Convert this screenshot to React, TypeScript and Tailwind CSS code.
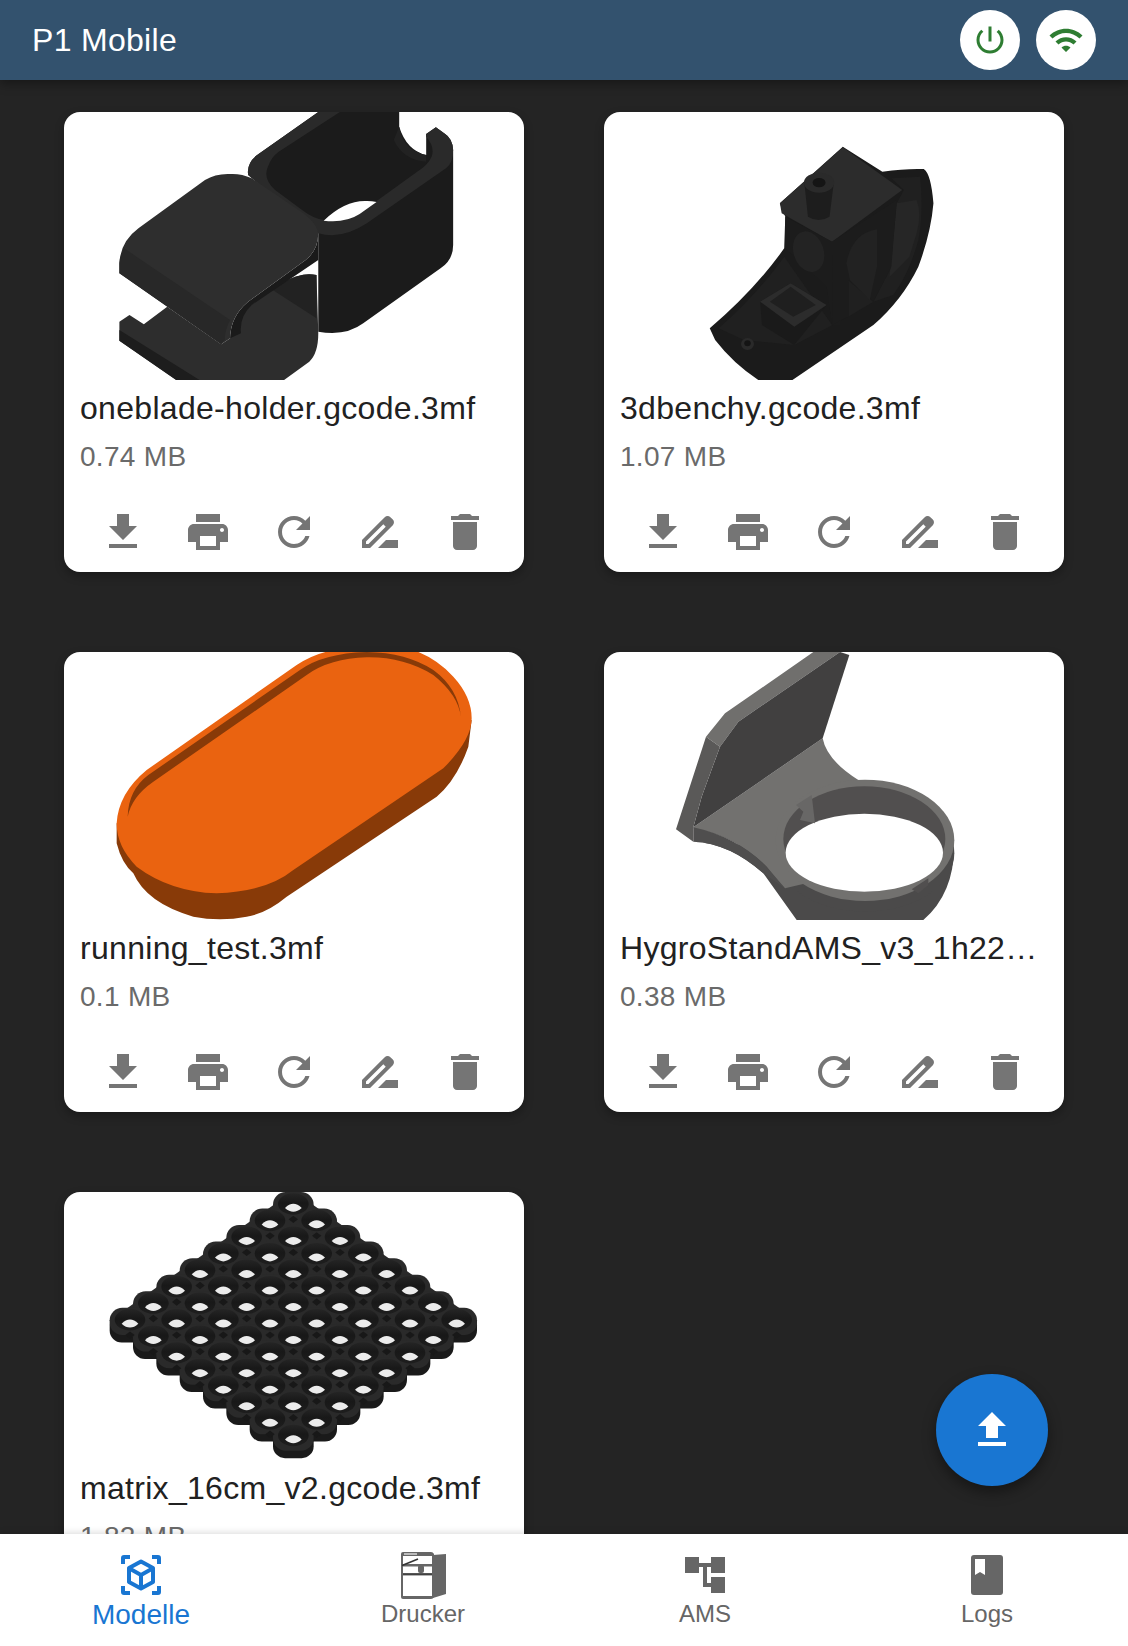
import React from 'react';

const font = { fontFamily: '"Liberation Sans", Arial, sans-serif' };

// material icon paths, 24x24
const ICONS = {
  download: 'M19 9h-4V3H9v6H5l7 7 7-7zM5 18v2h14v-2H5z',
  print: 'M19 8H5c-1.66 0-3 1.34-3 3v6h4v4h12v-4h4v-6c0-1.66-1.34-3-3-3zm-3 11H8v-5h8v5zm3-7c-.55 0-1-.45-1-1s.45-1 1-1 1 .45 1 1-.45 1-1 1zm-1-9H6v4h12V3z',
  refresh: 'M17.65 6.35C16.2 4.9 14.21 4 12 4c-4.42 0-7.99 3.58-7.99 8s3.57 8 7.99 8c3.73 0 6.84-2.55 7.73-6h-2.08c-.82 2.33-3.04 4-5.65 4-3.31 0-6-2.69-6-6s2.69-6 6-6c1.66 0 3.14.69 4.22 1.78L13 11h7V4l-2.35 2.35z',
  rename: 'M18.41 5.8L17.2 4.59c-.78-.78-2.05-.78-2.83 0l-2.68 2.68L3 15.96V20h4.04l8.74-8.74 2.63-2.63c.79-.78.79-2.05 0-2.83zM6.21 18H5v-1.21l8.66-8.66 1.21 1.21L6.21 18zM11 20l4-4h6v4H11z',
  trash: 'M6 19c0 1.1.9 2 2 2h8c1.1 0 2-.9 2-2V7H6v12zM19 4h-3.5l-1-1h-5l-1 1H5v2h14V4z',
  power: 'M13 3h-2v10h2V3zm4.83 2.17l-1.42 1.42C17.99 7.86 19 9.81 19 12c0 3.87-3.13 7-7 7s-7-3.13-7-7c0-2.19 1.01-4.14 2.58-5.42L6.17 5.17C4.23 6.82 3 9.26 3 12c0 4.97 4.03 9 9 9s9-4.03 9-9c0-2.74-1.23-5.18-3.17-6.83z',
  wifi: 'M1 9l2 2c4.97-4.97 13.03-4.97 18 0l2-2C16.93 2.93 7.08 2.93 1 9zm8 8l3 3 3-3c-1.65-1.66-4.34-1.66-6 0zm-4-4l2 2c2.76-2.76 7.24-2.76 10 0l2-2C15.14 9.14 8.87 9.14 5 13z',
  upload: 'M9 16h6v-6h4l-7-7-7 7h4zm-4 2h14v2H5z',
};

function Icon({ d, className }: { d: string; className: string }) {
  return (
    <svg viewBox="0 0 24 24" className={className} fill="currentColor">
      <path d={d} />
    </svg>
  );
}

function Art({ box, children }: { box: string; children: React.ReactNode }) {
  return (
    <svg viewBox={box} preserveAspectRatio="none" className="block w-[460px] h-[268px] shrink-0">
      {children}
    </svg>
  );
}

function Holder() {
  return (
    <Art box="178 336 1279 804">
      <path d="M885 700V995Q960 1010 1010 970L1225 805Q1260 780 1260 735V450Q1258 415 1235 400L1212 382L1185 402V465Q1130 450 1110 380V336H885L715 465Q685 490 690 525Z" fill="#1b1b1b" />
      <path d="M885 336L715 465Q685 490 690 525L885 700Q950 720 1020 670L1240 505Q1260 490 1260 450Q1258 415 1235 400L1212 382L1185 402V410Q1210 440 1200 470Q1190 495 1160 515L1000 640Q960 670 900 660Q870 655 840 630L765 570Q730 535 745 500Q755 470 775 455L945 336Z" fill="#2a2a2a" />
      <path d="M1110 380Q1120 450 1185 465V485Q1120 480 1095 420Z" fill="#222" />
      <path d="M900 662Q960 600 1020 603Q1035 603 1047 606L1000 642Q960 670 900 662Z" fill="#fff" />
      <path d="M880 825Q840 815 790 845L690 920Q645 960 640 1015L615 1033L465 920L400 973L360 945L332 965V1022L490 1140H790L860 1085Q885 1060 885 1000Z" fill="#2d2d2d" />
      <path d="M332 1022V990L555 1140H490Z" fill="#1d1d1d" />
      <path d="M880 825Q840 815 790 845L755 868L880 955Z" fill="#222" />
      <path d="M885 700Q885 750 850 780L690 905Q640 950 640 1015L670 1000Q665 950 700 915L885 780Z" fill="#1a1a1a" />
      <path d="M640 522Q600 520 570 540L385 685Q335 725 332 790V820L615 1033L640 1015Q640 950 690 905L850 780Q885 750 885 700Q880 665 830 630L700 535Q670 520 640 522Z" fill="#2e2e2e" />
      <path d="M345 745L640 960Q625 990 625 1020L615 1033L332 820V790Q334 765 345 745Z" fill="#282828" />
    </Art>
  );
}

function Benchy() {
  return (
    <Art box="111 336 1279 804">
      <path d="M405 985Q530 870 612 745L615 650L600 610L775 440L885 515Q950 505 1000 507Q1020 520 1027 610Q1020 700 985 800Q940 900 860 975L635 1140H540Q470 1090 420 1020Z" fill="#1b1b1b" />
      <path d="M430 985Q540 880 612 770L745 975L790 950V840L860 905L915 885Q960 820 985 720Q1000 640 990 530L910 535L945 570L925 610L910 800L860 905L790 950L640 1035L500 1020Z" fill="#202020" />
      <path d="M925 610L980 600Q995 640 980 700L960 770L905 830Z" fill="#262626" />
      <path d="M600 610L775 442L940 570L745 725L605 640Z" fill="#2c2c2c" />
      <path d="M615 650L745 725L770 975L745 975L730 860L615 745Z" fill="#1c1c1c" />
      <path d="M745 725L925 600L910 800L860 905L790 840V950L745 975Z" fill="#1c1c1c" />
      <ellipse cx="680" cy="755" rx="42" ry="62" fill="#232323" transform="rotate(-15 680 755)" />
      <path d="M785 790Q800 700 870 688V800L850 900L795 840Z" fill="#222" />
      <path d="M545 905L630 850L730 915L640 1035L550 975Z" fill="#1a1a1a" />
      <path d="M545 905L630 850L730 915L640 980Z" fill="#2c2c2c" />
      <path d="M572 905L630 860L700 915L637 950Z" fill="#1f1f1f" />
      <path d="M668 548H750L738 650Q708 670 678 650Z" fill="#1d1d1d" />
      <ellipse cx="709" cy="548" rx="42" ry="30" fill="#2a2a2a" />
      <ellipse cx="709" cy="548" rx="18" ry="14" fill="#151515" />
      <ellipse cx="510" cy="1032" rx="18" ry="18" fill="#2a2a2a" />
      <ellipse cx="510" cy="1030" rx="9" ry="9" fill="#141414" />
    </Art>
  );
}

function Tray() {
  return (
    <Art box="12 36 1380 804">
      <path d="M170 550V610Q185 670 220 700Q260 790 400 830Q480 845 560 830Q620 820 680 770L1130 470Q1190 420 1225 320L1235 240Z" fill="#883a08" />
      <path d="M170 550Q175 460 260 390L710 75Q770 36 830 30H1060Q1130 55 1180 110Q1235 170 1235 235Q1235 300 1150 385L700 690Q620 755 470 760Q330 755 230 680Q170 620 170 550Z" fill="#ea6310" />
      <path d="M203 530Q205 450 265 405L720 90Q790 40 920 36Q1040 38 1120 90Q1195 145 1203 232Q1195 165 1120 105Q1030 50 920 52Q810 55 740 105L280 425Q215 470 203 530Z" fill="#883a08" />
    </Art>
  );
}

function Stand() {
  return (
    <Art box="-48 36 1380 804">
      <path d="M220 605Q330 610 430 700L530 840H910Q1002 760 1002 620L940 600L465 620Z" fill="#4b4a4a" />
      <ellipse cx="735" cy="640" rx="268" ry="175" fill="#4b4a4a" />
      <path d="M220 562L608 295Q620 360 715 420H760L600 720L495 745Q470 720 440 680Q350 590 220 565Z" fill="#72716f" />
      <path d="M220 562V605Q330 610 430 700L495 745L440 680Q350 590 220 562Z" fill="#4f4e4e" />
      <ellipse cx="735" cy="601" rx="268" ry="182" fill="#72716f" />
      <ellipse cx="733" cy="597" rx="243" ry="158" fill="#514f4f" />
      <ellipse cx="733" cy="638" rx="236" ry="117" fill="#fff" />
      <path d="M528 495L575 465L585 550L540 540L550 515Z" fill="#686766" />
      <path d="M580 36H660L355 245L300 320L258 290L315 220Z" fill="#706f6d" />
      <path d="M660 36L688 45L608 295L220 562L245 470L300 320L355 245Z" fill="#414040" />
      <path d="M258 290L300 320L245 470L220 562V605L168 568Z" fill="#5a5958" />
      <path d="M875 748L925 715V735L895 760Z" fill="#514f4f" />
    </Art>
  );
}

function Matrix() {
  const cells: { x: number; y: number; k: string }[] = [];
  for (let s = 0; s < 15; s++) {
    for (let i = 0; i < 8; i++) {
      const j = s - i;
      if (j < 0 || j > 7) continue;
      cells.push({ x: 700 + (i - j) * 70, y: 83 + s * 49.6, k: `${i}-${j}` });
    }
  }
  return (
    <Art box="12 36 1380 804">
      <defs>
        <linearGradient id="well" x1="0" y1="0" x2="0" y2="1">
          <stop offset="0" stopColor="#252525" />
          <stop offset="0.45" stopColor="#181818" />
          <stop offset="1" stopColor="#1e1e1e" />
        </linearGradient>
      </defs>
      {cells.map((c) => (
        <rect key={c.k + 's'} x={c.x - 61} y={c.y - 30} width="122" height="87" rx="36" fill="#1a1a1a" />
      ))}
      <path d="M700 33L1252 422L700 810L148 422Z" fill="#2a2a2a" />
      {cells.map((c) => (
        <rect key={c.k + 'o'} x={c.x - 61} y={c.y - 47} width="122" height="82" rx="38" fill="#2a2a2a" />
      ))}
      {cells.map((c) => (
        <path key={c.k + 'g'} d={`M${c.x} ${c.y + 24}l14 11l-14 11l-14-11z`} fill="#181818" opacity={c.y > 750 ? 0 : 1} />
      ))}
      {cells.map((c) => (
        <g key={c.k}>
          <ellipse cx={c.x} cy={c.y - 11} rx="46" ry="32" fill="url(#well)" />
          <path d={`M${c.x - 25} ${c.y + 1}Q${c.x} ${c.y - 24} ${c.x + 25} ${c.y + 1}Q${c.x} ${c.y + 24} ${c.x - 25} ${c.y + 1}Z`} fill="#ececec" />
        </g>
      ))}
    </Art>
  );
}

const models = [
  { name: 'oneblade-holder.gcode.3mf', size: '0.74 MB', art: <Holder /> },
  { name: '3dbenchy.gcode.3mf', size: '1.07 MB', art: <Benchy /> },
  { name: 'running_test.3mf', size: '0.1 MB', art: <Tray /> },
  { name: 'HygroStandAMS_v3_1h22m_0.2mm.gcode.3mf', size: '0.38 MB', art: <Stand /> },
  { name: 'matrix_16cm_v2.gcode.3mf', size: '1.82 MB', art: <Matrix /> },
];

function ModelCard({ name, size, art }: { name: string; size: string; art: React.ReactNode }) {
  return (
    <div className="w-[460px] h-[460px] bg-white rounded-2xl overflow-hidden flex flex-col shadow-[0_4px_10px_rgba(0,0,0,0.3)]">
      {art}
      <div className="px-4 pt-[10px]">
        <p className="text-[32px] leading-[36px] tracking-[0.3px] text-[#212121] truncate">{name}</p>
        <p className="text-[28px] leading-[36px] tracking-[0.3px] mt-[13px] text-[#6a6a6a]">{size}</p>
      </div>
      <div className="px-4 mt-[33px] grid grid-cols-5 justify-items-center text-[#757575]">
        <Icon d={ICONS.download} className="w-12 h-12" />
        <Icon d={ICONS.print} className="w-12 h-12" />
        <Icon d={ICONS.refresh} className="w-12 h-12" />
        <Icon d={ICONS.rename} className="w-12 h-12" />
        <Icon d={ICONS.trash} className="w-12 h-12" />
      </div>
    </div>
  );
}

function NavItem({ label, active, icon }: { label: string; active?: boolean; icon: React.ReactNode }) {
  return (
    <div className={`flex flex-col items-center pt-[17px] ${active ? 'text-[#1976d2]' : 'text-[#666]'}`}>
      <div className="h-[48px] flex items-center justify-center">{icon}</div>
      <span className={active ? 'text-[28px] leading-[32px]' : 'text-[24px] leading-[30px]'}>{label}</span>
    </div>
  );
}

export default function App() {
  return (
    <div className="w-[1128px] h-[1646px] flex flex-col overflow-hidden bg-[#242424]" style={font}>
      <header className="h-20 shrink-0 z-10 bg-[#33526e] flex items-center justify-between pl-8 pr-8 shadow-[0_4px_10px_rgba(0,0,0,0.35)]">
        <span className="text-[32px] tracking-[0.3px] text-white">P1 Mobile</span>
        <div className="flex gap-4">
          <div className="w-[60px] h-[60px] rounded-full bg-white flex items-center justify-center text-[#2e7d32]">
            <Icon d={ICONS.power} className="w-9 h-9" />
          </div>
          <div className="w-[60px] h-[60px] rounded-full bg-white flex items-center justify-center text-[#2e7d32]">
            <Icon d={ICONS.wifi} className="w-9 h-9" />
          </div>
        </div>
      </header>

      <main className="relative flex-1 min-h-0 overflow-hidden">
        <div className="grid grid-cols-[460px_460px] gap-20 pl-16 pt-8">
          {models.map((m) => (
            <ModelCard key={m.name} {...m} />
          ))}
        </div>
        <button className="absolute right-20 bottom-12 w-28 h-28 rounded-full bg-[#1976d2] text-white flex items-center justify-center shadow-[0_6px_14px_rgba(0,0,0,0.4)]">
          <Icon d={ICONS.upload} className="w-12 h-12" />
        </button>
      </main>

      <nav className="h-28 shrink-0 z-10 bg-white grid grid-cols-4 shadow-[0_-2px_6px_rgba(0,0,0,0.12)]">
        <NavItem
          active
          label="Modelle"
          icon={
            <svg viewBox="0 0 40 40" className="w-10 h-10" fill="none" stroke="currentColor">
              <path d="M2 9V3a1 1 0 0 1 1-1H9M31 2h6a1 1 0 0 1 1 1V9M38 31v6a1 1 0 0 1-1 1H31M9 38H3a1 1 0 0 1-1-1V31" strokeWidth="4" />
              <path d="M20 6.5L32 13v14l-12 6.5L8 27V13zM8.5 13.5L20 20l11.5-6.5M20 20v13" strokeWidth="4" strokeLinejoin="round" />
            </svg>
          }
        />
        <NavItem
          label="Drucker"
          icon={
            <svg viewBox="0 0 46 48" className="w-[46px] h-12" fill="currentColor">
              <path d="M33 4L46 3V43L33 47Z" />
              <path d="M1 3Q1 1 3 1H31Q33 1 34 3V46Q33 48 31 48H3Q1 48 1 46Z" />
              <path d="M3 5H32V13H3ZM3 15.5H32V22H3ZM3 24.5H32V45H3Z" fill="#fff" />
              <path d="M2 14.5L18 8" stroke="#333" strokeWidth="1.5" />
              <path d="M3 23.2H32" stroke="#333" strokeWidth="1" />
              <rect x="18" y="14" width="6" height="8" rx="2" />
              <rect x="4" y="2" width="13" height="2" fill="#bbb" />
            </svg>
          }
        />
        <NavItem
          label="AMS"
          icon={
            <svg viewBox="0 0 40 36" className="w-10 h-9" fill="currentColor">
              <path d="M0 0H14V16H0ZM26 0H40V16H26ZM26 20H40V36H26Z" />
              <path d="M14 6H26V10H22V26H26V30H18V10H14Z" />
            </svg>
          }
        />
        <NavItem
          label="Logs"
          icon={
            <svg viewBox="0 0 32 40" className="w-8 h-10" fill="currentColor">
              <path d="M3 0H29A3 3 0 0 1 32 3V37A3 3 0 0 1 29 40H3A3 3 0 0 1 0 37V3A3 3 0 0 1 3 0Z" />
              <path d="M4 4H14V20L9 17L4 20Z" fill="#fff" />
            </svg>
          }
        />
      </nav>
    </div>
  );
}
